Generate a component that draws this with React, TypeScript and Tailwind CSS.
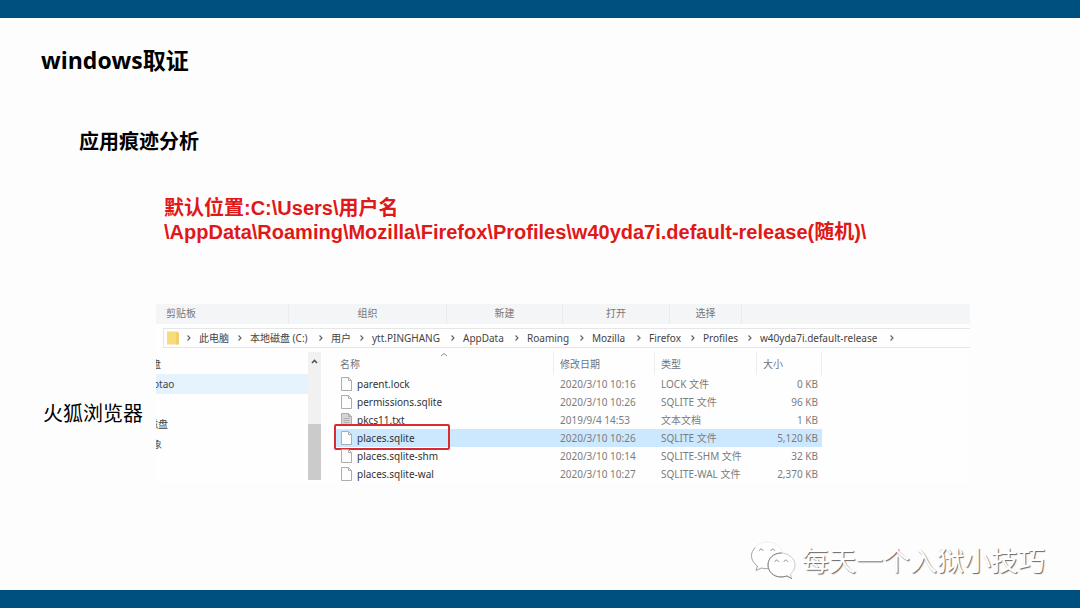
const ribbonGroups = [
  { label: "剪贴板", cell: "w-[133px] pl-[10px]" },
  { label: "组织", cell: "w-[158px] text-center" },
  { label: "新建", cell: "w-[116px] text-center" },
  { label: "打开", cell: "w-[107px] text-center" },
  { label: "选择", cell: "w-[72px] text-center" },
];

const crumbs = [
  { label: "此电脑", cell: "w-[51px]" },
  { label: "本地磁盘 (C:)", cell: "w-[81px]" },
  { label: "用户", cell: "w-[41px]" },
  { label: "ytt.PINGHANG", cell: "w-[91px]" },
  { label: "AppData", cell: "w-[64px]" },
  { label: "Roaming", cell: "w-[65px]" },
  { label: "Mozilla", cell: "w-[57px]" },
  { label: "Firefox", cell: "w-[54px]" },
  { label: "Profiles", cell: "w-[57px]" },
  { label: "w40yda7i.default-release", cell: "w-[142px]" },
];

const files = [
  { name: "parent.lock", date: "2020/3/10 10:16", type: "LOCK 文件", size: "0 KB" },
  { name: "permissions.sqlite", date: "2020/3/10 10:26", type: "SQLITE 文件", size: "96 KB" },
  { name: "pkcs11.txt", date: "2019/9/4 14:53", type: "文本文档", size: "1 KB", text: true },
  { name: "places.sqlite", date: "2020/3/10 10:26", type: "SQLITE 文件", size: "5,120 KB", selected: true },
  { name: "places.sqlite-shm", date: "2020/3/10 10:14", type: "SQLITE-SHM 文件", size: "32 KB" },
  { name: "places.sqlite-wal", date: "2020/3/10 10:27", type: "SQLITE-WAL 文件", size: "2,370 KB" },
];

function CrumbArrow() {
  return (
    <svg viewBox="0 0 20 10" className="h-[10px] w-5 shrink-0" fill="none" stroke="#666" strokeWidth="1.2" aria-hidden="true">
      <path d="M8.500 2.500 11 5 8.500 7.500" />
    </svg>
  );
}

function FileIcon({ text }: { text?: boolean }) {
  return (
    <svg viewBox="0 0 11 14" className="h-[14px] w-[11px] shrink-0" aria-hidden="true">
      <path d="M.5 .5H7.5L10.5 3.5V13.5H.5Z" fill={text ? "#d6d6d6" : "#fdfdfd"} stroke="#adadad" />
      <path d="M7.5 .5V3.5H10.5" fill="none" stroke="#adadad" />
      {text && <path d="M2.5 5.5H8.5M2.5 7.5H8.5M2.5 9.5H8.5M2.5 11.5H8.5" stroke="#b0b0b0" />}
    </svg>
  );
}

function Explorer() {
  return (
    <section
      aria-label="文件资源管理器"
      className="mr-[110px] min-w-0 flex-1 overflow-hidden bg-[#fefefe] font-['Noto_Sans','Noto_Sans_CJK_SC',sans-serif] text-[10px] leading-[18px] text-[#444]"
    >
      <div className="flex h-5 items-center bg-[#f4f5f7] text-[#777]">
        {ribbonGroups.map((g) => (
          <div key={g.label} className={`h-5 shrink-0 border-r border-[#e9ebed] ${g.cell}`}>
            {g.label}
          </div>
        ))}
      </div>

      <nav aria-label="路径" className="mt-1 ml-[7px] flex h-5 items-center border-y border-l border-[#e6e6e6] whitespace-nowrap">
        <svg viewBox="0 0 12 14" className="ml-[3px] h-[14px] w-3 shrink-0" aria-hidden="true">
          <path d="M0 .5H11V13.500H0Z" fill="#f8dc7c" />
          <path d="M9 1.500H12V13.500H9Z" fill="#f0cf6c" />
        </svg>
        <CrumbArrow />
        <ol className="flex items-center">
          {crumbs.map((c) => (
            <li key={c.label} className={`flex shrink-0 items-center justify-between ${c.cell}`}>
              <a href="#">{c.label}</a>
              <CrumbArrow />
            </li>
          ))}
        </ol>
      </nav>

      <div className="flex pt-1">
        <ul className="h-[128px] w-[152px] shrink-0 overflow-hidden pt-[2px] leading-5">
          <li className="-ml-[5px] h-5">盘</li>
          <li className="h-5 bg-[#e5f3ff]">
            <span className="-ml-[3px]">otao</span>
          </li>
          <li className="h-5" />
          <li className="-ml-[8px] h-5">磁盘</li>
          <li className="-ml-[4px] h-5">象</li>
        </ul>
        <div className="flex h-[128px] w-[13px] shrink-0 flex-col justify-between bg-[#f1f1f1]">
          <svg viewBox="0 0 13 16" className="h-4 w-[13px]" fill="none" stroke="#555" strokeWidth="1.6" aria-hidden="true">
            <path d="M4 11 6.500 8.500 9 11" />
          </svg>
          <div className="h-[56px] bg-[#cbcbcb]" />
        </div>

        <table className="ml-4 w-[485px] table-fixed border-separate border-spacing-0 text-left whitespace-nowrap text-[#7c7c7c]">
          <colgroup>
            <col className="w-[217px]" />
            <col className="w-[101px]" />
            <col className="w-[102px]" />
            <col className="w-[65px]" />
          </colgroup>
          <thead>
            <tr className="h-[23px] text-[#6b7480]">
              <th className="relative border-r border-[#ededed] p-0 pl-[3px] font-normal">
                名称
                <svg viewBox="0 0 8 5" className="absolute top-0 left-[103px] h-[5px] w-2" fill="none" stroke="#888" aria-hidden="true">
                  <path d="M1 4 4 1.500 7 4" />
                </svg>
              </th>
              <th className="border-r border-[#ededed] p-0 pl-[6px] font-normal">修改日期</th>
              <th className="border-r border-[#ededed] p-0 pl-[6px] font-normal">类型</th>
              <th className="border-r border-[#ededed] p-0 pl-[6px] font-normal">大小</th>
            </tr>
          </thead>
          <tbody>
            {files.map((f) => (
              <tr key={f.name} className={f.selected ? "h-[18px] bg-[#cce8ff]" : "h-[18px]"}>
                <td className="relative p-0 text-[#333]">
                  {f.selected && (
                    <span className="absolute -top-[5px] -left-[3px] h-[26px] w-[116px] rounded-[2px] border-2 border-[#d92b30] bg-white pt-[3px]">
                      <span className="block h-[18px] bg-[#cce8ff]" />
                    </span>
                  )}
                  <span className="relative flex h-[18px] items-center gap-[5px] pl-1">
                    <FileIcon text={f.text} />
                    {f.name}
                  </span>
                </td>
                <td className="p-0 pl-[6px]">{f.date}</td>
                <td className="p-0 pl-[6px]">{f.type}</td>
                <td className="p-0 pr-1 text-right">{f.size}</td>
              </tr>
            ))}
          </tbody>
        </table>
      </div>
    </section>
  );
}

function Watermark() {
  return (
    <div className="mt-auto flex items-center justify-end gap-[6px] pr-[35px] pb-[10px]">
      <svg viewBox="0 0 46 40" className="h-10 w-[46px]" fill="#fff" stroke="#a9a9a9" strokeLinecap="round" strokeLinejoin="round" aria-hidden="true">
        <path d="M17 2C8 2 1.500 8 1.500 15.500C1.500 20 4 23.500 7.500 26L6 30.500L11.500 28C13.500 28.500 15.500 29 18 28.500C28 28 33 22 32.500 14C32 7 25 2 17 2Z" stroke="#f0f0f0" />
        <path d="M5 8C2.500 10.500 1.500 13 1.500 15.500C1.500 20 4 23.500 7.500 26L6 30.500L11.500 28C13.500 28.500 15.500 28.800 18 28.500" fill="none" stroke="#a5a5a5" />
        <path d="M31 13C23.500 13 18 18.500 18 25C18 31.500 23.500 37 31 37C33 37 35 36.500 37 36L41.500 38.500L40.500 34C43 32 45 29 45 25C45 18.500 38.500 13 31 13Z" stroke="#c9c9c9" />
        <path d="M31 13C23.500 13 18 18.500 18 25C18 31.500 23.500 37 31 37C33 37 35 36.500 37 36L41.500 38.500" fill="none" stroke="#858585" />
        <path d="M9.500 10.500C10 8.500 12.500 8.500 13 10.500M21 10.500C21.500 8.500 24 8.500 24.500 10.500M25 21.500C25.500 19.500 28 19.500 28.500 21.500M34 21.500C34.500 19.500 37 19.500 37.500 21.500" fill="none" stroke="#8d8d8d" />
      </svg>
      <p className="pt-[2px] text-[27px] leading-9 text-white [text-shadow:1px_1px_1px_#666]">每天一个入狱小技巧</p>
    </div>
  );
}

export default function App() {
  return (
    <div className="flex min-h-screen flex-col bg-[#fdfdfd] font-['Open_Sans','Noto_Sans_CJK_SC',sans-serif] text-black">
      <header className="h-[18px] bg-[#00507f]" />
      <main className="flex flex-1 flex-col">
        <h1 className="mt-7 pl-[41px] text-[23px] leading-7 font-bold">windows取证</h1>
        <h2 className="mt-[54px] pl-[79px] text-[20px] leading-7 font-bold">应用痕迹分析</h2>
        <p className="mt-10 pl-[164px] font-['Liberation_Sans','Noto_Sans_CJK_SC',sans-serif] text-[20px] leading-6 font-bold text-[#e01818]">
          默认位置:C:\Users\用户名
          <br />
          \AppData\Roaming\Mozilla\Firefox\Profiles\w40yda7i.default-release(随机)\
        </p>
        <div className="mt-[60px] flex">
          <h3 className="w-[156px] shrink-0 pt-24 pl-[43px] text-[20px] leading-7">火狐浏览器</h3>
          <Explorer />
        </div>
        <Watermark />
      </main>
      <footer className="h-[18px] bg-[#00507f]" />
    </div>
  );
}
